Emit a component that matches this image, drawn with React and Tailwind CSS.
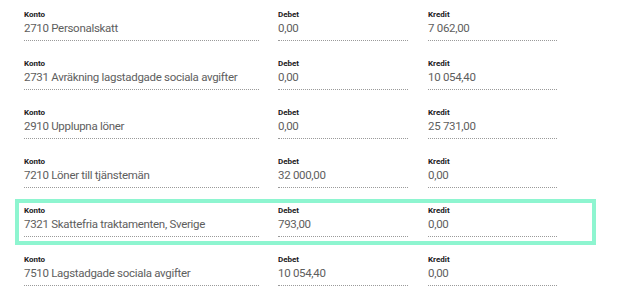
import React from "react";

const rows = [
  { k: "2710 Personalskatt", d: "0,00", c: "7 062,00" },
  { k: "2731 Avräkning lagstadgade sociala avgifter", d: "0,00", c: "10 054,40" },
  { k: "2910 Upplupna löner", d: "0,00", c: "25 731,00" },
  { k: "7210 Löner till tjänstemän", d: "32 000,00", c: "0,00" },
  { k: "7321 Skattefria traktamenten, Sverige", d: "793,00", c: "0,00", hl: true },
  { k: "7510 Lagstadgade sociala avgifter", d: "10 054,40", c: "0,00" },
];

function Cell({ label, value, w }) {
  return (
    <div className={`${w} pt-[3px]`}>
      <div className="text-[8px] leading-[9px] font-bold text-[#1a1a1a]">{label}</div>
      <div className="text-[11.5px] leading-[18px] tracking-[-0.3px] text-[#5e5e5e] pb-[3px] border-b border-dotted border-[#9a9a9a] whitespace-nowrap">
        {value}
      </div>
    </div>
  );
}

export default function App() {
  return (
    <div
      className="w-[639px] h-[298px] bg-white overflow-hidden pt-[3px] flex flex-col gap-[3px]"
      style={{ fontFamily: "Roboto, 'Liberation Sans', sans-serif" }}
    >
      {rows.map((r, i) => (
        <div
          key={i}
          className={`ml-[15px] w-[581px] h-[46px] shrink-0 border-4 flex pl-[5px] ${
            r.hl ? "border-[#8ef5d0]" : "border-transparent"
          }`}
        >
          <Cell label="Konto" value={r.k} w="w-[235px]" />
          <div className="w-[19px]" />
          <Cell label="Debet" value={r.d} w="w-[130px]" />
          <div className="w-[20px]" />
          <Cell label="Kredit" value={r.c} w="w-[129px]" />
        </div>
      ))}
    </div>
  );
}
